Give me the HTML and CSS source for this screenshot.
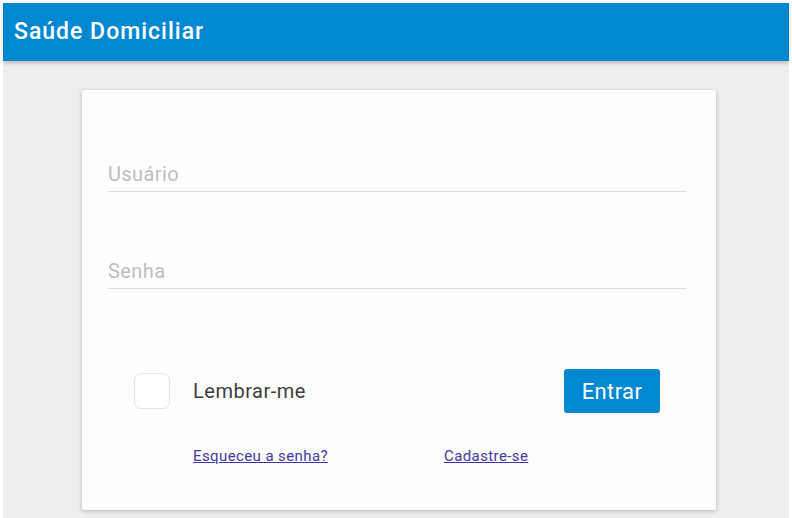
FILE: index.html
```html
<!DOCTYPE html>
<html lang="pt-BR">
<head>
<meta charset="utf-8">
<title>Saúde Domiciliar</title>
<link rel="stylesheet" href="styles.css">
</head>
<body>
<div class="app">
  <header class="topbar">
    <h1 class="title">Saúde Domiciliar</h1>
  </header>
  <main class="content">
    <form class="card">
      <div class="field">
        <input class="input" type="text" placeholder="Usuário">
      </div>
      <div class="field field-second">
        <input class="input" type="password" placeholder="Senha">
      </div>
      <div class="actions">
        <label class="remember">
          <span class="checkbox"></span>
          <span class="remember-text">Lembrar-me</span>
        </label>
        <button class="btn" type="button">Entrar</button>
      </div>
      <div class="links">
        <a class="link" href="#">Esqueceu a senha?</a>
        <a class="link" href="#">Cadastre-se</a>
      </div>
    </form>
  </main>
</div>
</body>
</html>
```
FILE: styles.css
```css
html, body {
  margin: 0;
  padding: 0;
  background: #ffffff;
}
body {
  padding: 3px 3px 0 3px;
  font-family: Roboto, "Liberation Sans", sans-serif;
}
.app {
  height: 515px;
  background: #eeeeee;
  display: flex;
  flex-direction: column;
  overflow: hidden;
}
.topbar {
  height: 58px;
  background: #0288d1;
  display: flex;
  align-items: center;
  padding: 0 11px;
  box-shadow: 0 2px 4px rgba(0,0,0,0.22);
  position: relative;
  z-index: 1;
  flex-shrink: 0;
}
.title {
  margin: 0;
  margin-top: -2px;
  color: #ffffff;
  font-size: 23px;
  font-weight: 500;
  letter-spacing: 1px;
}
.content {
  flex: 1;
  padding: 29px 0 0 79px;
}
.card {
  width: 634px;
  height: 420px;
  box-sizing: border-box;
  background: #fdfdfd;
  box-shadow: 0 1px 4px rgba(0,0,0,0.25);
  border-radius: 2px;
  padding-top: 68px;
}
.field {
  margin: 0 30px 0 26px;
}
.field-second {
  margin-top: 63px;
}
.input {
  display: block;
  width: 100%;
  height: 34px;
  box-sizing: border-box;
  border: none;
  border-bottom: 1px solid #dcdcdc;
  background: transparent;
  padding: 0 0 1px 0;
  font-family: Roboto, "Liberation Sans", sans-serif;
  font-size: 20px;
  letter-spacing: 0.4px;
  color: #333;
  outline: none;
}
.input::placeholder {
  color: #bdbdbd;
}
.actions {
  margin-top: 80px;
  display: flex;
  align-items: center;
  justify-content: space-between;
  padding: 0 56px 0 52px;
  height: 44px;
}
.remember {
  display: flex;
  align-items: center;
  gap: 23px;
}
.checkbox {
  width: 36px;
  height: 36px;
  box-sizing: border-box;
  border: 1px solid #e4e4e4;
  border-radius: 7px;
  background: #fff;
}
.remember-text {
  font-size: 20px;
  letter-spacing: 0.5px;
  color: #3f3f3f;
}
.btn {
  width: 96px;
  height: 44px;
  border: none;
  border-radius: 3px;
  background: #0288d1;
  color: #fff;
  font-family: Roboto, "Liberation Sans", sans-serif;
  font-size: 22px;
  letter-spacing: 0.4px;
  padding: 0;
}
.links {
  margin-top: 34px;
  display: flex;
  padding-left: 111px;
  gap: 116px;
}
.link {
  font-size: 15px;
  letter-spacing: 0.4px;
  color: #3f3aa5;
  text-decoration: underline;
}
```
